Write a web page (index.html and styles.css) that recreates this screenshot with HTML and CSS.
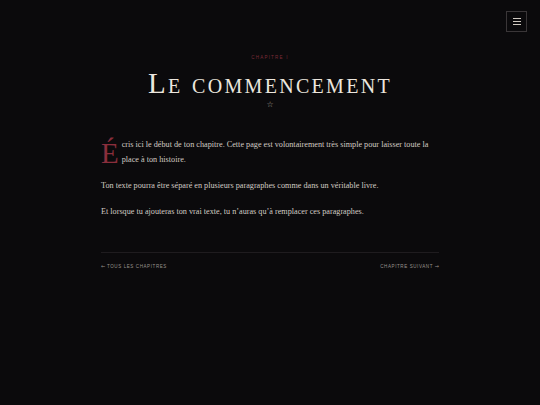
FILE: index.html
```html
<!DOCTYPE html>
<html lang="fr">
<head>
<meta charset="utf-8">
<title>Le commencement</title>
<link rel="stylesheet" href="styles.css">
</head>
<body>
<button class="menu" aria-label="Menu">
  <span class="bar"></span><span class="bar"></span><span class="bar"></span>
</button>
<main class="chapter">
  <header class="head">
    <p class="kicker">Chapitre I</p>
    <h1 class="title">Le commencement</h1>
    <p class="orn">☆</p>
  </header>
  <article class="text">
    <p class="first"><span class="drop">É</span>cris ici le début de ton chapitre. Cette page est volontairement très simple pour laisser toute la place à ton histoire.</p>
    <p>Ton texte pourra être séparé en plusieurs paragraphes comme dans un véritable livre.</p>
    <p>Et lorsque tu ajouteras ton vrai texte, tu n’auras qu’à remplacer ces paragraphes.</p>
  </article>
  <nav class="pager">
    <a href="#"><span class="arrow">←</span> Tous les chapitres</a>
    <a href="#">Chapitre suivant <span class="arrow">→</span></a>
  </nav>
</main>
</body>
</html>
```

FILE: styles.css
```css
html, body {
  margin: 0;
  padding: 0;
  background: #0b0a0c;
  height: 100%;
}
body {
  font-family: "Liberation Serif", "DejaVu Serif", serif;
  color: #d9d2ca;
}
.menu {
  position: absolute;
  top: 11px;
  right: 13px;
  width: 21px;
  height: 21px;
  border: 1px solid #3a3638;
  background: transparent;
  padding: 0;
  display: flex;
  flex-direction: column;
  align-items: center;
  justify-content: center;
  gap: 2px;
}
.bar {
  display: block;
  width: 8px;
  height: 1px;
  background: #cfc8c0;
}
.chapter {
  width: 338px;
  margin: 0 auto;
  padding-top: 54px;
}
.head {
  text-align: center;
}
.kicker {
  margin: 0;
  font-family: "Liberation Sans", Arial, sans-serif;
  font-size: 4.5px;
  letter-spacing: 1.2px;
  text-transform: uppercase;
  color: #7d2b38;
  line-height: 8px;
}
.title {
  margin: 6px 0 0;
  font-weight: normal;
  font-variant: small-caps;
  font-size: 29px;
  line-height: 30px;
  letter-spacing: 2.3px;
  color: #ece6de;
}
.orn {
  margin: 2px 0 0;
  font-family: "DejaVu Sans", sans-serif;
  font-size: 8px;
  line-height: 10px;
  color: #a8a098;
}
.text {
  margin-top: 27px;
}
.text p {
  margin: 0 0 11px;
  font-size: 8.2px;
  line-height: 15px;
  color: #d2cbc3;
}
.drop {
  float: left;
  font-size: 29px;
  line-height: 24px;
  margin: 4px 3px 0 0;
  color: #8a2e3c;
}
.pager {
  margin-top: 33px;
  border-top: 1px solid #1f1c1f;
  padding-top: 9px;
  display: flex;
  justify-content: space-between;
}
.pager a {
  font-family: "Liberation Sans", Arial, sans-serif;
  font-size: 4.5px;
  letter-spacing: 0.6px;
  text-transform: uppercase;
  color: #9a938c;
  text-decoration: none;
  line-height: 8px;
}
.arrow {
  font-family: "DejaVu Sans", sans-serif;
  font-size: 5px;
  letter-spacing: 0;
}
```
